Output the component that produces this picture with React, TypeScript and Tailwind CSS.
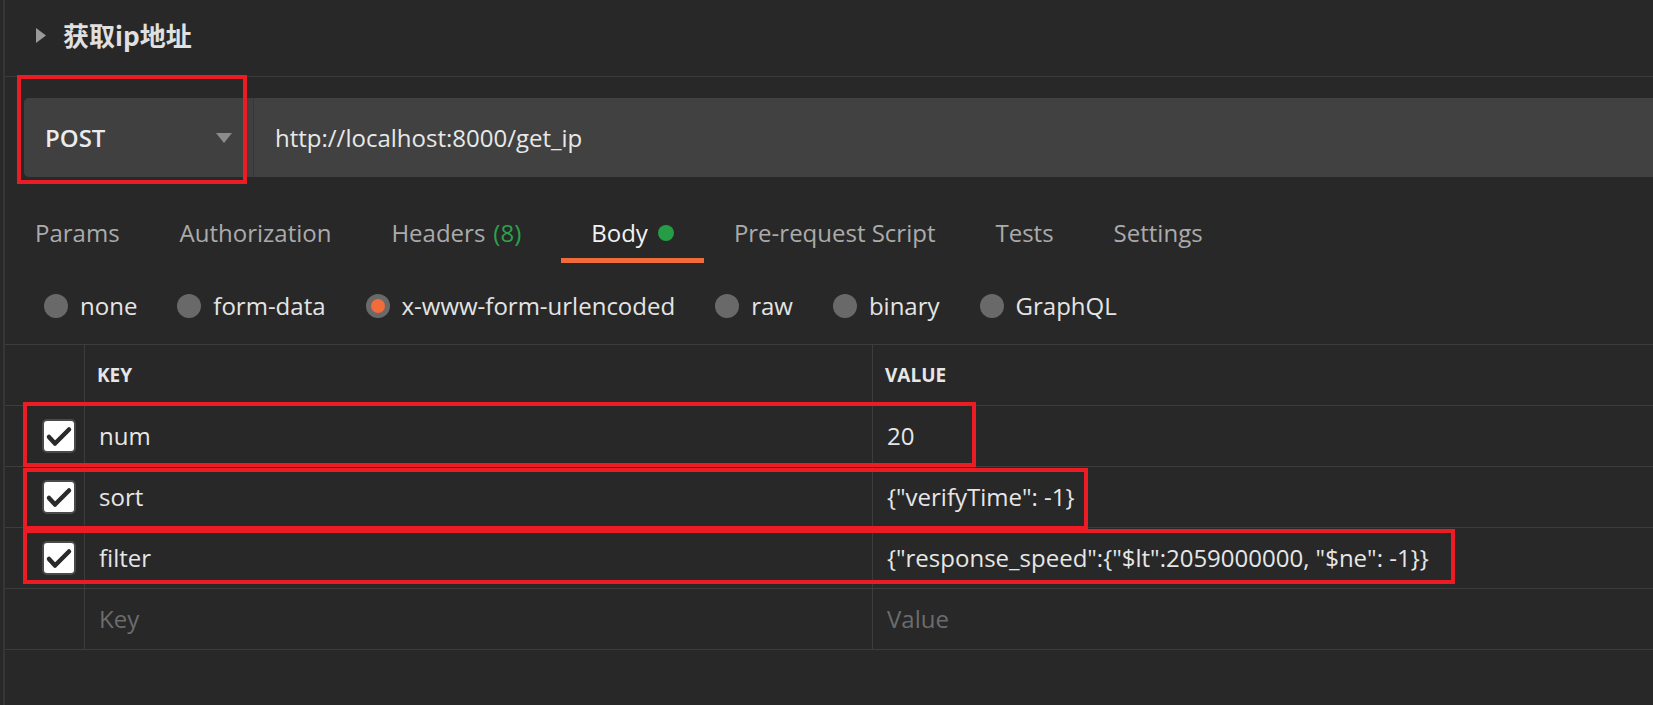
import React from 'react';

interface Tab {
  label: string;
  count?: string;
  active?: boolean;
}

interface Row {
  key: string;
  value: string;
}

const TABS: Tab[] = [
  { label: 'Params' },
  { label: 'Authorization' },
  { label: 'Headers', count: '(8)' },
  { label: 'Body', active: true },
  { label: 'Pre-request Script' },
  { label: 'Tests' },
  { label: 'Settings' },
];

const BODY_TYPES = ['none', 'form-data', 'x-www-form-urlencoded', 'raw', 'binary', 'GraphQL'];
const SELECTED_TYPE = 'x-www-form-urlencoded';

const ROWS: Row[] = [
  { key: 'num', value: '20' },
  { key: 'sort', value: '{"verifyTime": -1}' },
  { key: 'filter', value: '{"response_speed":{"$lt":2059000000, "$ne": -1}}' },
];

const CheckBox = () => (
  <div className="w-[34px] h-[34px] rounded-[5px] bg-white border-2 border-[#4a4a4a] flex items-center justify-center">
    <svg width="34" height="34" viewBox="0 0 34 34" className="shrink-0">
      <path d="M7 18 L13 24.5 L27 10.5" fill="none" stroke="#2a2a2a" strokeWidth={4.5} strokeLinecap="round" strokeLinejoin="round" />
    </svg>
  </div>
);

const App = () => {
  return (
    <div className="relative w-[1653px] h-[705px] overflow-hidden bg-[#282828] pl-[3px] font-['Open_Sans','Noto_Sans_CJK_SC',sans-serif]">
      <div className="h-full border-l-2 border-[#363636] flex flex-col">
        {/* Request name */}
        <div className="h-[77px] border-b border-[#3c3c3c] flex items-center pl-[31px] pb-[6px] shrink-0">
          <svg width="10" height="15" viewBox="0 0 10 15" className="mr-[17px]">
            <path d="M0 0 L10 7.5 L0 15 Z" fill="#9a9a9a" />
          </svg>
          <span className="text-[26px] font-bold text-[#e0e0e0] font-['Noto_Sans_CJK_SC',sans-serif] leading-none">获取ip地址</span>
        </div>

        {/* Method + URL */}
        <div className="mt-[21px] ml-[19px] h-[79px] flex shrink-0">
          <div className="w-[229px] h-full bg-[#404040] rounded-l-[5px] flex items-center justify-between pl-[21px] pr-[21px]">
            <span className="text-[24px] font-semibold text-[#ececec]">POST</span>
            <svg width="16" height="10" viewBox="0 0 16 10">
              <path d="M0 0 L16 0 L8 10 Z" fill="#8c8c8c" />
            </svg>
          </div>
          <div className="w-px h-full bg-[#353535]" />
          <div className="flex-1 h-full bg-[#414141] flex items-center pl-[21px]">
            <span className="text-[24px] text-[#e8e8e8]">http://localhost:8000/get_ip</span>
          </div>
        </div>

        {/* Tabs */}
        <div className="mt-[40px] flex shrink-0">
          {TABS.map((tab) => (
            <div
              key={tab.label}
              className={`px-[30px] pb-[9px] border-b-[5px] flex items-center text-[24px] leading-[32px] ${
                tab.active ? 'border-[#f26b3a] text-[#f2f2f2]' : 'border-transparent text-[#ababab]'
              } ${tab.label === 'Headers' ? 'mr-[10px]' : ''}`}
            >
              <span>{tab.label}</span>
              {tab.count && <span className="ml-[8px] text-[#2ba24c]">{tab.count}</span>}
              {tab.active && <span className="ml-[10px] w-[16px] h-[16px] rounded-full bg-[#259d45]" />}
            </div>
          ))}
        </div>

        {/* Body types */}
        <div className="mt-[27px] pl-[39px] flex items-center gap-[40px] shrink-0">
          {BODY_TYPES.map((type) => (
            <div key={type} className="flex items-center gap-[12px]">
              <span className="w-[24px] h-[24px] rounded-full bg-[#696969] flex items-center justify-center">
                {type === SELECTED_TYPE && <span className="w-[14px] h-[14px] rounded-full bg-[#f26b3a]" />}
              </span>
              <span className="text-[24px] leading-[32px] text-[#e4e4e4]">{type}</span>
            </div>
          ))}
        </div>

        {/* Key / value table */}
        <div className="mt-[22px] border-t border-[#3c3c3c] shrink-0">
          <div className="h-[61px] flex border-b border-[#3c3c3c]">
            <div className="w-[80px] border-r border-[#3c3c3c]" />
            <div className="w-[788px] border-r border-[#3c3c3c] flex items-center pl-[12px]">
              <span className="text-[19px] font-bold text-[#e6e6e6]">KEY</span>
            </div>
            <div className="flex-1 flex items-center pl-[12px]">
              <span className="text-[19px] font-bold text-[#e6e6e6]">VALUE</span>
            </div>
          </div>
          {ROWS.map((row) => (
            <div key={row.key} className="h-[61px] flex border-b border-[#3c3c3c]">
              <div className="w-[80px] border-r border-[#3c3c3c] flex items-center pl-[37px]">
                <CheckBox />
              </div>
              <div className="w-[788px] border-r border-[#3c3c3c] flex items-center pl-[14px]">
                <span className="text-[24px] text-[#e6e6e6]">{row.key}</span>
              </div>
              <div className="flex-1 flex items-center pl-[14px]">
                <span className="text-[24px] text-[#e6e6e6]">{row.value}</span>
              </div>
            </div>
          ))}
          <div className="h-[61px] flex border-b border-[#3c3c3c]">
            <div className="w-[80px] border-r border-[#3c3c3c]" />
            <div className="w-[788px] border-r border-[#3c3c3c] flex items-center pl-[14px]">
              <span className="text-[24px] text-[#6c6c6c]">Key</span>
            </div>
            <div className="flex-1 flex items-center pl-[14px]">
              <span className="text-[24px] text-[#6c6c6c]">Value</span>
            </div>
          </div>
        </div>
      </div>

      {/* Red annotation boxes */}
      <div className="absolute left-[17px] top-[75px] w-[230px] h-[109px] border-4 border-[#ec1c24] pointer-events-none" />
      <div className="absolute left-[23px] top-[402px] w-[953px] h-[65px] border-4 border-[#ec1c24] pointer-events-none" />
      <div className="absolute left-[23px] top-[468px] w-[1065px] h-[62px] border-4 border-[#ec1c24] pointer-events-none" />
      <div className="absolute left-[23px] top-[529px] w-[1432px] h-[55px] border-4 border-[#ec1c24] pointer-events-none" />
    </div>
  );
};

export default App;
